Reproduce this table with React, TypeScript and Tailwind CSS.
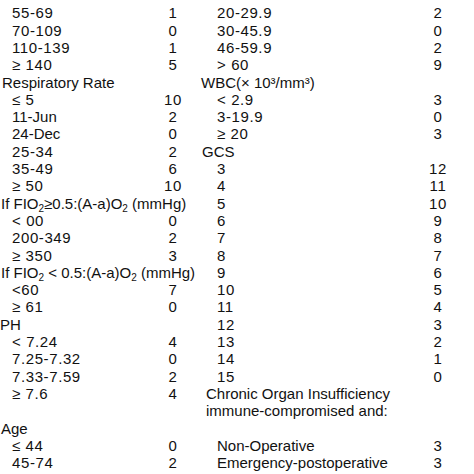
import React from "react";

type Row = { label?: React.ReactNode; score?: string; head?: boolean; indent?: string };

const Sub = ({ children }: { children: React.ReactNode }) => (
  <span className="relative top-[3px] text-[10px] leading-none">{children}</span>
);

const left: Row[] = [
  { label: "55-69", score: "1" },
  { label: "70-109", score: "0" },
  { label: "110-139", score: "1" },
  { label: "≥ 140", score: "5" },
  { label: "Respiratory Rate", head: true, indent: "pl-[2px]" },
  { label: "≤ 5", score: "10" },
  { label: "11-Jun", score: "2" },
  { label: "24-Dec", score: "0" },
  { label: "25-34", score: "2" },
  { label: "35-49", score: "6" },
  { label: "≥ 50", score: "10" },
  {
    label: (
      <>
        If FIO<Sub>2</Sub>≥0.5:(A-a)O<Sub>2</Sub> (mmHg)
      </>
    ),
    head: true,
    indent: "pl-[1px]",
  },
  { label: "< 00", score: "0" },
  { label: "200-349", score: "2" },
  { label: "≥ 350", score: "3" },
  {
    label: (
      <>
        If FIO<Sub>2</Sub> &lt; 0.5:(A-a)O<Sub>2</Sub> (mmHg)
      </>
    ),
    head: true,
    indent: "pl-[1px]",
  },
  { label: "<60", score: "7" },
  { label: "≥ 61", score: "0" },
  { label: "PH", head: true, indent: "pl-0" },
  { label: "< 7.24", score: "4" },
  { label: "7.25-7.32", score: "0" },
  { label: "7.33-7.59", score: "2" },
  { label: "≥ 7.6", score: "4" },
  {},
  { label: "Age", head: true, indent: "pl-[1px]" },
  { label: "≤ 44", score: "0" },
  { label: "45-74", score: "2" },
];

const right: Row[] = [
  { label: "20-29.9", score: "2" },
  { label: "30-45.9", score: "0" },
  { label: "46-59.9", score: "2" },
  { label: "> 60", score: "9" },
  { label: "WBC(× 10³/mm³)", head: true, indent: "pl-[1px]" },
  { label: "< 2.9", score: "3" },
  { label: "3-19.9", score: "0" },
  { label: "≥ 20", score: "3" },
  { label: "GCS", head: true, indent: "pl-[2px]" },
  ...["3", "4", "5", "6", "7", "8", "9", "10", "11", "12", "13", "14", "15"].map((g, i) => ({
    label: g,
    score: String(12 - i),
  })),
  { label: "Chronic Organ Insufficiency", head: true, indent: "pl-[6px]" },
  { label: "immune-compromised and:", head: true, indent: "pl-[6px]" },
  {},
  { label: "Non-Operative", score: "3" },
  { label: "Emergency-postoperative", score: "3" },
];

const numeric = (l: React.ReactNode) => typeof l === "string" && /^[\d≤≥<>\s.\-]+$/.test(l);

function Column({ rows, labelW, itemIndent }: { rows: Row[]; labelW: string; itemIndent: string }) {
  return (
    <div className="flex flex-col">
      {rows.map((r, i) => (
        <div key={i} className={`grid ${labelW} h-[17.3px] leading-[17.3px]`}>
          <div
            className={`whitespace-nowrap ${r.head ? r.indent : itemIndent} ${
              numeric(r.label) ? "tracking-[0.6px]" : ""
            }`}
          >
            {r.label}
          </div>
          <div className="text-center tracking-[0.6px]">{r.score}</div>
        </div>
      ))}
    </div>
  );
}

export default function App() {
  return (
    <div
      className="w-[474px] h-[474px] overflow-hidden bg-white text-[#111111] text-[15px] grid grid-cols-[200px_274px] pt-[4.4px]"
      style={{ fontFamily: '"Liberation Sans", Arial, sans-serif' }}
    >
      <Column rows={left} labelW="grid-cols-[163px_20px]" itemIndent="pl-[12px]" />
      <Column rows={right} labelW="grid-cols-[228px_20px]" itemIndent="pl-[17px]" />
    </div>
  );
}
